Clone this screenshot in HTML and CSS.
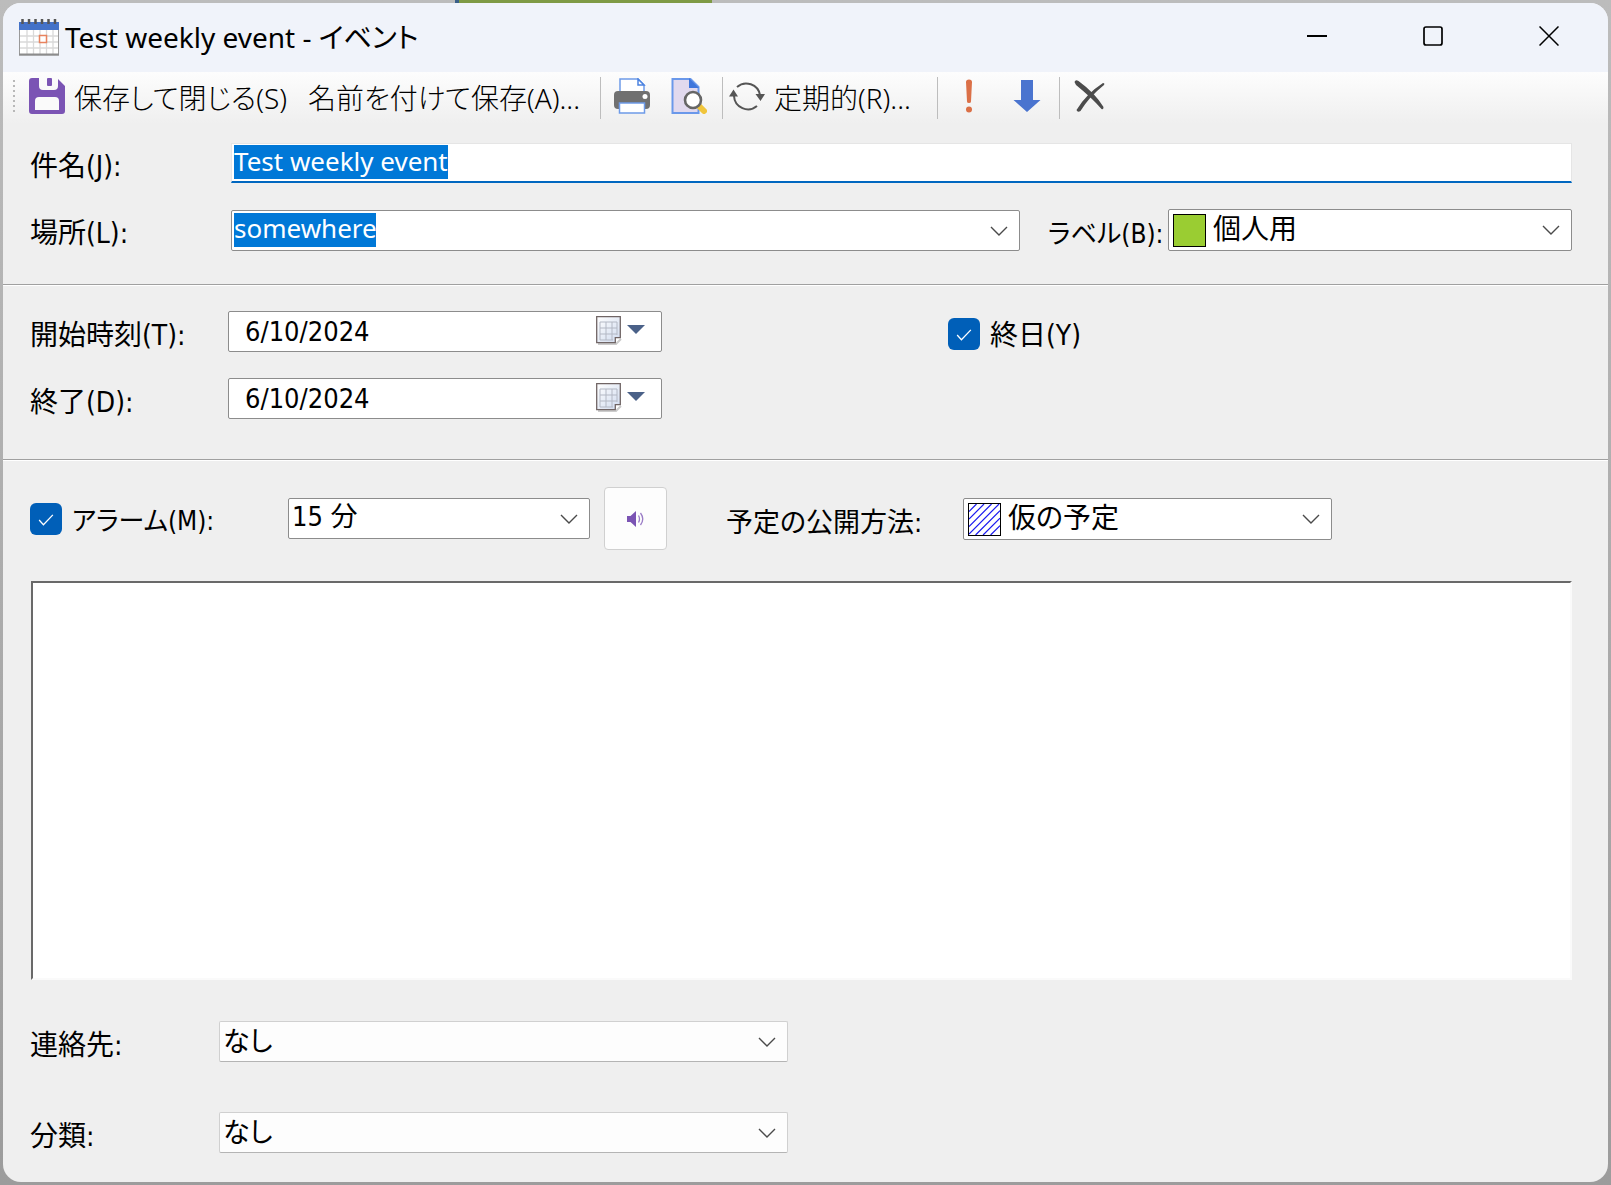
FILE: index.html
```html
<!DOCTYPE html>
<html lang="ja">
<head>
<meta charset="utf-8">
<title>Test weekly event - イベント</title>
<link rel="stylesheet" href="styles.css">
</head>
<body>
<svg class="symbols" aria-hidden="true">
  <symbol id="chevron" viewBox="0 0 18 10"><path d="M1 1l8 8 8-8" fill="none" stroke="#4a4a4a" stroke-width="1.4"/></symbol>
  <symbol id="check" viewBox="0 0 18 14"><path d="M1 7l5 5.500L17 1" fill="none" stroke="#fff" stroke-width="1.500"/></symbol>
  <linearGradient id="sheet" x1="0" y1="0" x2="1" y2="1"><stop offset="0" stop-color="#fff"/><stop offset="1" stop-color="#cfdaee"/></linearGradient>
  <symbol id="datepick" viewBox="0 0 50 30">
    <path d="M2 28h18l5-5" fill="none" stroke="#ccc" stroke-width="2"/>
    <path d="M.7.7h23.600v21h-5v5H.7z" fill="url(#sheet)" stroke="#706565" stroke-width="1.300"/>
    <path d="M4 6h17M4 12h17M4 18h17M4 24h13M4 6v18M10 6v18M16 6v18M21 6v13" fill="none" stroke="#b3b8c4"/>
    <path d="M31 9h18l-9 9z" fill="#4a6188"/>
  </symbol>
</svg>
<div class="backdrop" aria-hidden="true"><span class="backdrop-event"></span></div>
<main class="window">
  <header class="titlebar">
    <svg class="app-icon" viewBox="0 0 40 37">
      <rect x=".5" y="5" width="39" height="31" fill="#fff" stroke="#9a9a9a"/>
      <path d="M8 11v24M14.500 11v24M21 11v24M27.500 11v24M34 11v24M1 17h38M1 23h38M1 29h38" stroke="#d9d9d9" stroke-width="1.300"/>
      <path d="M0 35.500h40" stroke="#8c8c8c" stroke-width="2"/>
      <rect y="3" width="40" height="8" fill="#4472c8"/>
      <path d="M3.500 0v5M10 0v5M16.500 0v5M23 0v5M29.500 0v5M36 0v5" stroke="#555" stroke-width="2.500"/>
      <rect x="20.500" y="16.500" width="7" height="7" fill="#fff" stroke="#e8825e" stroke-width="1.500"/>
    </svg>
    <h1 class="title">Test weekly event - イベント</h1>
    <div class="caption-buttons">
      <button class="caption-button" aria-label="最小化"><svg viewBox="0 0 20 20"><path d="M0 10h20" stroke="#000" stroke-width="2"/></svg></button>
      <button class="caption-button" aria-label="最大化"><svg viewBox="0 0 20 20"><rect x="1" y="1" width="18" height="18" rx="2" fill="none" stroke="#000" stroke-width="1.700"/></svg></button>
      <button class="caption-button" aria-label="閉じる"><svg viewBox="0 0 20 20"><path d="M.5.5l19 19M19.500.5l-19 19" stroke="#000" stroke-width="1.500"/></svg></button>
    </div>
  </header>
  <div class="toolbar" role="toolbar">
    <span class="grip"></span>
    <button class="tool tool-save">
      <svg class="icon" viewBox="0 0 36 36"><path d="M3 0h7v8q0 4 4 4h11q4 0 4-4V1l7 7v25q0 3-3 3H3q-3 0-3-3V3q0-3 3-3z" fill="#7b54b4"/><rect x="18" y="0" width="5" height="8" rx="1" fill="#7b54b4"/><path d="M6 32V23q0-4 4-4h16q4 0 4 4v9z" fill="#fafafa"/></svg>
      <span class="tool-text">保存して閉じる(S)</span>
    </button>
    <button class="tool tool-save-as"><span class="tool-text">名前を付けて保存(A)...</span></button>
    <span class="separator"></span>
    <button class="tool tool-print" aria-label="印刷">
      <svg class="icon" viewBox="0 0 36 36"><path d="M6 1h18l6 6v8H6z" fill="#fff" stroke="#6e9be8" stroke-width="1.500"/><path d="M24 1v6h6z" fill="#fff" stroke="#4c83e0" stroke-width="1.500"/><rect y="13" width="36" height="18" rx="4" fill="#707070"/><circle cx="31" cy="18.500" r="2.500" fill="#fff"/><path d="M5.500 25h25v10h-25z" fill="#fff" stroke="#6e9be8" stroke-width="1.500"/></svg>
    </button>
    <button class="tool tool-preview" aria-label="印刷プレビュー">
      <svg class="icon" viewBox="0 0 36 36"><path d="M1.500 1h18l8 8v26h-26z" fill="#e1d9ee" stroke="#6a98ea" stroke-width="2"/><path d="M18 0l10 10H18z" fill="#3f76dc"/><path d="M28 28l5 5" stroke="#f0c53c" stroke-width="6" stroke-linecap="round"/><circle cx="22" cy="22" r="8" fill="#fff" stroke="#666" stroke-width="2.600"/></svg>
    </button>
    <span class="separator"></span>
    <button class="tool tool-recur">
      <svg class="icon" viewBox="0 0 36 36"><path d="M8 9a14 14 0 0 1 23 8M28 28A14 14 0 0 1 5 18" fill="none" stroke="#555" stroke-width="2"/><path d="M26.500 16H36l-4.500 7zM0 18.500l4.500-7 4.500 7z" fill="#555"/></svg>
      <span class="tool-text">定期的(R)...</span>
    </button>
    <span class="separator"></span>
    <button class="tool tool-high" aria-label="重要度: 高">
      <svg class="icon" viewBox="0 0 36 36"><path d="M15 4q0-2.500 3-2.500T21 4l-1 19.500q0 1.500-2 1.500t-2-1.500z" fill="#db7047"/><circle cx="18" cy="31.500" r="3" fill="#db7047"/></svg>
    </button>
    <button class="tool tool-low" aria-label="重要度: 低">
      <svg class="icon" viewBox="0 0 36 36"><path d="M12 2h12v20h7.500L18 34 4.500 22H12z" fill="#4a74cf"/></svg>
    </button>
    <span class="separator"></span>
    <button class="tool tool-delete" aria-label="削除">
      <svg class="icon" viewBox="0 0 36 36"><path d="M2.500 4q1-3 4-1Q23 15 31.500 29q0 3-2 2Q20 20 4 7zM31 5q2 0 1 2Q17 19 8.500 33q-3 2-4-1Q14 16 31 5z" fill="#4c4c4c"/></svg>
    </button>
  </div>

  <form class="form">
    <section class="group group-subject">
      <div class="row">
        <label class="label label-wide" for="subject">件名(J):</label>
        <input class="field subject" id="subject" type="text" value="Test weekly event">
      </div>
      <div class="row">
        <label class="label label-wide" for="location">場所(L):</label>
        <div class="combo combo-location">
          <input class="field location" id="location" type="text" value="somewhere">
          <svg class="chevron"><use href="#chevron"/></svg>
        </div>
        <label class="label label-kana label-color" for="color">ラベル(B):</label>
        <div class="combo combo-color">
          <span class="swatch swatch-green"></span>
          <select class="field with-swatch" id="color"><option>個人用</option></select>
          <svg class="chevron"><use href="#chevron"/></svg>
        </div>
      </div>
    </section>

    <section class="group group-time">
      <div class="row">
        <label class="label label-time" for="start">開始時刻(T):</label>
        <div class="combo combo-date">
          <input class="field date" id="start" type="text" value="6/10/2024">
          <svg class="date-icon"><use href="#datepick"/></svg>
        </div>
        <div class="tick tick-allday">
          <span class="box"><input class="checkbox" id="allday" type="checkbox" checked><svg class="check"><use href="#check"/></svg></span>
          <label class="label" for="allday">終日(Y)</label>
        </div>
      </div>
      <div class="row">
        <label class="label label-time" for="end">終了(D):</label>
        <div class="combo combo-date">
          <input class="field date" id="end" type="text" value="6/10/2024">
          <svg class="date-icon"><use href="#datepick"/></svg>
        </div>
      </div>
    </section>

    <section class="group group-body">
      <div class="row row-alarm">
        <div class="tick tick-alarm">
          <span class="box"><input class="checkbox" id="alarm" type="checkbox" checked><svg class="check"><use href="#check"/></svg></span>
          <label class="label label-kana" for="alarm">アラーム(M):</label>
        </div>
        <div class="combo combo-alarm">
          <select class="field" aria-label="アラーム"><option>15 分</option></select>
          <svg class="chevron"><use href="#chevron"/></svg>
        </div>
        <button class="sound" type="button" aria-label="サウンド">
          <svg viewBox="0 0 18 16"><path d="M0 5h3.500L9 0v16L3.500 11H0z" fill="#7b54b4"/><path d="M11.500 4.500q2 3.500 0 7M13.500 2q4.500 6 0 12" fill="none" stroke="#9a7cc6" stroke-width="1.300"/></svg>
        </button>
        <label class="label label-show" for="show">予定の公開方法:</label>
        <div class="combo combo-show">
          <svg class="swatch" viewBox="0 0 33 33"><path d="M0 8L8 0M0 16L16 0M0 24L24 0M0 32L32 0M7 33L33 7M15 33L33 15M23 33L33 23" stroke="#1c1cf0" stroke-width="1.300"/></svg>
          <select class="field with-swatch" id="show"><option>仮の予定</option></select>
          <svg class="chevron"><use href="#chevron"/></svg>
        </div>
      </div>
      <textarea class="notes" aria-label="メモ"></textarea>
      <div class="row row-contact">
        <label class="label label-bottom" for="contact">連絡先:</label>
        <div class="combo combo-bottom">
          <select class="field soft" id="contact"><option>なし</option></select>
          <svg class="chevron"><use href="#chevron"/></svg>
        </div>
      </div>
      <div class="row row-category">
        <label class="label label-bottom" for="category">分類:</label>
        <div class="combo combo-bottom">
          <select class="field soft" id="category"><option>なし</option></select>
          <svg class="chevron"><use href="#chevron"/></svg>
        </div>
      </div>
    </section>
  </form>
</main>
</body>
</html>
```

FILE: styles.css
```css
*,
*::before {
  box-sizing: border-box;
}

body {
  margin: 0;
  height: 100vh;
  min-height: 900px;
  padding: 3px;
  display: flex;
  background: linear-gradient(#bcbcbc, #9c9c9c);
  color: #000;
  font: 27px/32px "DejaVu Sans Condensed", "Noto Sans CJK JP", sans-serif;
  font-feature-settings: "palt";
}

button,
input,
select,
textarea {
  margin: 0;
  font: inherit;
  font-feature-settings: inherit;
  color: inherit;
}

button {
  padding: 0;
  border: 0;
  background: none;
}

.symbols {
  position: absolute;
  width: 0;
  height: 0;
}

.backdrop {
  position: absolute;
  inset: 0 0 auto 0;
  height: 3px;
  padding-left: 455px;
}

.backdrop-event {
  display: block;
  width: 257px;
  height: 3px;
  border-left: 4px solid #3a6088;
  background: #7f9a45;
}

.window {
  position: relative;
  flex: 1;
  min-width: 0;
  display: flex;
  flex-direction: column;
  overflow: hidden;
  border-radius: 18px;
  background: #efefef;
}

/* Title bar */
.titlebar {
  height: 69px;
  flex: none;
  display: flex;
  align-items: center;
  padding-left: 16px;
  padding-right: 1px;
  background: #f0f3fa;
}

.app-icon {
  width: 40px;
  height: 37px;
  margin-right: 6px;
}

.title {
  margin: 0;
  flex: 1;
  padding-bottom: 2px;
  font-family: "Noto Sans", "Noto Sans CJK JP", sans-serif;
  font-size: 28px;
  font-weight: 400;
  white-space: nowrap;
}

.caption-buttons {
  display: flex;
  align-self: flex-start;
  height: 66px;
}

.caption-button {
  width: 116px;
  display: flex;
  align-items: center;
  justify-content: center;
}

.caption-button svg {
  width: 20px;
  height: 20px;
}

/* Toolbar */
.toolbar {
  height: 52px;
  flex: none;
  display: flex;
  align-items: center;
  padding: 0 0 4px 10px;
  background: linear-gradient(#fdfdfd, #efefef);
  font-family: "Noto Sans", "Noto Sans CJK JP", sans-serif;
  font-size: 28px;
  font-weight: 300;
  white-space: nowrap;
}

.grip {
  width: 2px;
  height: 32px;
  margin-right: 14px;
  background: repeating-linear-gradient(#b8b8b8 0 2px, transparent 2px 5px);
}

.tool {
  display: flex;
  align-items: center;
  gap: 9px;
}

.tool-text {
  padding-top: 4px;
}

.icon {
  width: 36px;
  height: 36px;
  flex: none;
}

.separator {
  width: 1px;
  height: 42px;
  margin-top: 4px;
  background: #bdbdbd;
}

.tool-save { width: 279px; }
.tool-save-as { width: 292px; }
.tool-print { width: 70px; padding-left: 13px; }
.tool-preview { width: 51px; }
.tool-recur { width: 214px; padding-left: 6px; }
.tool-high { width: 62px; padding-left: 13px; }
.tool-low { width: 59px; padding-left: 9px; }
.tool-delete { padding-left: 12px; }

/* Form */
.form {
  flex: 1;
  display: flex;
  flex-direction: column;
}

.group {
  display: flex;
  flex-direction: column;
  gap: 26px;
  padding: 0 36px 0 27px;
}

.group-subject {
  padding-top: 19px;
  padding-bottom: 33px;
}

.group-time {
  padding-top: 25px;
  padding-bottom: 40px;
}

.group-subject,
.group-time {
  border-bottom: 1px solid #a0a0a0;
  box-shadow: 0 1px #fff;
  margin-bottom: 1px;
}

.group-body {
  flex: 1;
  gap: 0;
  padding-top: 26px;
  padding-bottom: 29px;
}

.row {
  display: flex;
  align-items: center;
}

.label {
  flex: none;
  padding-top: 8px;
  font-size: 28px;
  white-space: nowrap;
}

.label-kana {
  font-size: 26px;
}

.label-wide { width: 201px; }
.label-time { width: 198px; }
.label-bottom { width: 189px; }
.label-color { width: 148px; padding-left: 28px; }
.label-show { width: 296px; padding-left: 59px; font-size: 27px; }

.field {
  display: block;
  width: 100%;
  height: 41px;
  padding: 0 40px 4px 3px;
  border: 1px solid #8c8c8c;
  border-radius: 2px;
  background-color: #fff;
  appearance: none;
  outline: 0;
}

.subject,
.location {
  padding-left: 2px;
  color: #fff;
  font-family: "Noto Sans", sans-serif;
  font-size: 26px;
  background-image: linear-gradient(#0078d7, #0078d7);
  background-repeat: no-repeat;
  background-position: 2px 1px;
}

.subject {
  height: 40px;
  border-color: #e5e5e5;
  border-bottom: 2px solid #0067c0;
  border-radius: 0;
  background-size: 214px 34px;
}

.location {
  background-position-y: 2px;
  background-size: 142px 34px;
}

.date {
  padding: 0 70px 0 16px;
}

.with-swatch {
  height: 42px;
  padding-bottom: 0;
  padding-left: 44px;
  font-size: 28px;
}

.soft {
  padding-bottom: 0;
  border-color: #d0d0d0;
  border-bottom-color: #b4b4b4;
  background-color: #fdfdfd;
}

.combo {
  position: relative;
  min-width: 0;
}

.combo-location { flex: 789 1 0; }
.combo-color { flex: 404 1 0; }
.combo-date { width: 434px; }
.combo-alarm { width: 302px; }
.combo-show { width: 369px; }
.combo-bottom { width: 569px; }

.chevron {
  position: absolute;
  right: 12px;
  top: 16px;
  width: 18px;
  height: 10px;
  pointer-events: none;
}

.date-icon {
  position: absolute;
  right: 16px;
  top: 5px;
  width: 50px;
  height: 30px;
}

.swatch {
  position: absolute;
  left: 5px;
  top: 5px;
  width: 33px;
  height: 33px;
  border: 1px solid #000;
  background: #fff;
}

.swatch-green {
  background: #9acd32;
}

.tick {
  display: flex;
  align-items: center;
  gap: 10px;
}

.tick .label {
  padding-top: 4px;
}

.tick-allday {
  align-self: flex-end;
  margin-left: 286px;
}

.tick-alarm { width: 258px; }

.box {
  position: relative;
  width: 32px;
  height: 32px;
}

.checkbox {
  display: block;
  width: 32px;
  height: 32px;
  border-radius: 6px;
  background: #005fb8;
  appearance: none;
}

.check {
  position: absolute;
  left: 8px;
  top: 11px;
  width: 16px;
  height: 12px;
  pointer-events: none;
}

.sound {
  width: 63px;
  height: 63px;
  margin-left: 14px;
  display: flex;
  align-items: center;
  justify-content: center;
  border: 1px solid #d0d0d0;
  border-radius: 4px;
  background: #fdfdfd;
}

.sound svg {
  width: 18px;
  height: 16px;
}

.notes {
  flex: 1;
  display: block;
  min-height: 120px;
  margin: 31px 0 41px 1px;
  padding: 4px;
  border: 2px solid;
  border-color: #696969 #fafafa #fafafa #696969;
  background: #fff;
  resize: none;
}

.row-category {
  margin-top: 50px;
}
```
